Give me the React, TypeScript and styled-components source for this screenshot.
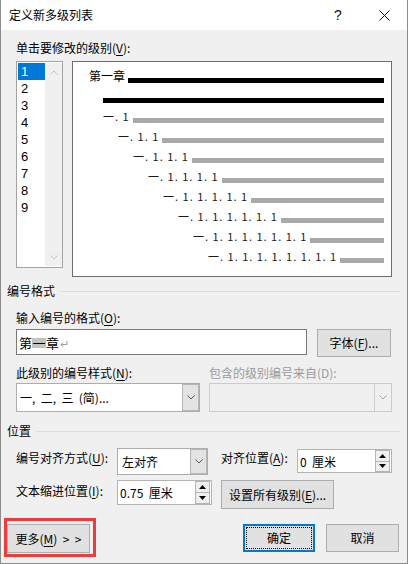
import React from "react";
import styled, { createGlobalStyle } from "styled-components";

const GlobalStyle = createGlobalStyle`
  html, body { margin: 0; padding: 0; background: #f0f0f0; }
  body {
    font-family: "Noto Sans CJK SC", "Microsoft YaHei UI", sans-serif;
    font-size: 12px;
    color: #000;
  }
  * { box-sizing: border-box; }
  u { text-underline-offset: 2px; }
`;

const Window = styled.div`
  width: 408px;
  height: 564px;
  background: #f0f0f0;
  border: 1px solid #8c8c8c;
  border-top: none;
  display: flex;
  flex-direction: column;
  overflow: hidden;
`;

const TitleBar = styled.div`
  height: 30px;
  flex: none;
  background: #fff;
  display: flex;
  align-items: center;
  padding-left: 8px;
`;

const TitleText = styled.div`
  flex: 1;
  font-size: 12px;
  line-height: 16px;
`;

const CaptionButton = styled.div`
  width: 46px;
  height: 30px;
  display: flex;
  align-items: center;
  justify-content: center;
  font-family: "Liberation Sans", sans-serif;
  font-size: 14px;
  color: #111;
`;

const Body = styled.div`
  flex: 1;
  display: flex;
  flex-direction: column;
  padding: 0 15px;
`;

const Label = styled.div<{ $mt?: number; $disabled?: boolean; $w?: number }>`
  font-size: 12px;
  line-height: 16px;
  white-space: nowrap;
  margin-top: ${(p) => p.$mt ?? 0}px;
  color: ${(p) => (p.$disabled ? "#9a9a9a" : "#000")};
  ${(p) => (p.$w ? `width: ${p.$w}px; flex: none;` : "")}
`;

const LevelRow = styled.div`
  margin-top: 5px;
  display: flex;
  align-items: flex-start;
  height: 216px;
`;

const ListBox = styled.div`
  width: 47px;
  height: 207px;
  border: 1px solid #a3a3a3;
  background: #fff;
  padding: 1px 0 1px 1px;
  display: flex;
`;

const ListItems = styled.div`
  width: 27px;
  display: flex;
  flex-direction: column;
`;

const ListItem = styled.div<{ $selected?: boolean }>`
  height: 17px;
  line-height: 17px;
  padding-left: 3px;
  font-family: "Liberation Sans", Arial, sans-serif;
  font-size: 13px;
  background: ${(p) => (p.$selected ? "#0078d7" : "transparent")};
  color: ${(p) => (p.$selected ? "#fff" : "#000")};
`;

const ScrollTrack = styled.div`
  width: 17px;
  background: #f0f0f0;
  display: flex;
  flex-direction: column;
  justify-content: space-between;
  align-items: center;
  padding: 7px 0 6px;
`;

const Preview = styled.div`
  margin-left: 9px;
  width: 320px;
  height: 216px;
  border: 1px solid #6e6e6e;
  background: #fff;
  padding: 3px 7px 0 0;
  display: flex;
  flex-direction: column;
`;

const PreviewRow = styled.div<{ $indent: number }>`
  height: 20px;
  display: flex;
  align-items: flex-end;
  padding-left: ${(p) => p.$indent}px;
`;

const RowText = styled.span<{ $main?: boolean }>`
  font-size: ${(p) => (p.$main ? 12 : 11)}px;
  letter-spacing: ${(p) => (p.$main ? 0 : 1)}px;
  line-height: 14px;
  margin-bottom: 2px;
  color: ${(p) => (p.$main ? "#000" : "#1a1a1a")};
  white-space: pre;
`;

const RowLine = styled.div<{ $dark?: boolean; $gap: number }>`
  flex: 1;
  height: 5px;
  margin-bottom: 2px;
  margin-left: ${(p) => p.$gap}px;
  background: ${(p) => (p.$dark ? "#000" : "#a9a9a9")};
`;

const GroupHeader = styled.div<{ $mt: number }>`
  margin: ${(p) => p.$mt}px -8px 0 -9px;
  display: flex;
  align-items: center;
  font-size: 12px;
  line-height: 16px;
`;

const GroupLine = styled.div`
  flex: 1;
  height: 1px;
  margin-left: 5px;
  background: #dcdcdc;
`;

const Row = styled.div<{ $mt: number; $h: number }>`
  margin-top: ${(p) => p.$mt}px;
  height: ${(p) => p.$h}px;
  display: flex;
  align-items: flex-start;
`;

const TextInput = styled.div`
  width: 291px;
  height: 26px;
  border: 1px solid #7a7a7a;
  background: #fff;
  padding: 1px 2px 0;
  font-size: 13px;
  line-height: 16px;
  display: flex;
  align-items: center;
  align-self: flex-start;
`;

const Highlight = styled.span`
  display: inline-block;
  width: 14px;
  height: 10px;
  line-height: 10px;
  text-align: center;
  background: #c3c3c3;
`;

const ReturnMark = styled.span`
  color: #a0a0a0;
  font-size: 11px;
  margin-left: 1px;
`;

const PushButton = styled.div<{ $w: number; $h: number; $ml?: number }>`
  position: relative;
  width: ${(p) => p.$w}px;
  height: ${(p) => p.$h}px;
  margin-left: ${(p) => p.$ml ?? 0}px;
  flex: none;
  background: #e1e1e1;
  border: 1px solid #adadad;
  display: flex;
  align-items: center;
  justify-content: center;
  font-size: 12px;
  line-height: 16px;
  white-space: pre;
`;

const DefaultButton = styled(PushButton)`
  border: 2px solid #0078d7;
  &::after {
    content: "";
    position: absolute;
    inset: 1px;
    border: 1px dotted #000;
  }
`;

const Combo = styled.div<{ $w: number; $h: number; $ml?: number; $disabled?: boolean }>`
  width: ${(p) => p.$w}px;
  height: ${(p) => p.$h}px;
  margin-left: ${(p) => p.$ml ?? 0}px;
  flex: none;
  border: 1px solid ${(p) => (p.$disabled ? "#cccccc" : "#adadad")};
  background: ${(p) => (p.$disabled ? "#f0f0f0" : "#fff")};
  display: flex;
  align-items: stretch;
`;

const ComboText = styled.div<{ $pl?: number }>`
  flex: 1;
  padding-left: ${(p) => p.$pl ?? 3}px;
  display: flex;
  align-items: center;
  font-size: 12px;
  white-space: pre;
`;

const ComboArrow = styled.div<{ $disabled?: boolean }>`
  width: 17px;
  flex: none;
  display: flex;
  align-items: center;
  justify-content: center;
  background: ${(p) => (p.$disabled ? "#f0f0f0" : "#e3e3e3")};
  border: 1px solid ${(p) => (p.$disabled ? "#cccccc" : "#b6b6b6")};
  border-width: ${(p) => (p.$disabled ? "0 0 0 1px" : "1px")};
`;

const SpinBox = styled.div<{ $w: number; $h: number; $mt?: number }>`
  width: ${(p) => p.$w}px;
  height: ${(p) => p.$h}px;
  margin-top: ${(p) => p.$mt ?? 0}px;
  flex: none;
  border: 1px solid #b4b4b4;
  background: #fff;
  display: flex;
`;

const SpinText = styled.div`
  flex: 1;
  padding-left: 2px;
  display: flex;
  align-items: center;
  font-size: 12px;
  white-space: pre;
`;

const SpinButtons = styled.div`
  width: 15px;
  margin: 0 1px 0 0;
  display: flex;
  flex-direction: column;
`;

const SpinButton = styled.div`
  flex: 1;
  border: 1px solid #b4b4b4;
  background: #efefef;
  display: flex;
  align-items: center;
  justify-content: center;
  & + & { border-top: none; }
`;

const ButtonRow = styled.div`
  margin: 15px -7px 0 -9px;
  display: flex;
  align-items: flex-start;
`;

const Marked = styled.div`
  position: relative;
`;

const RedFrame = styled.div`
  position: absolute;
  top: -6px;
  left: -3px;
  right: -6px;
  bottom: -4px;
  border: 3px solid #ef3b3b;
  pointer-events: none;
`;

const Spacer = styled.div`
  flex: 1;
`;

const Chevron = ({ up, color }: { up?: boolean; color: string }) => (
  <svg width="8" height="5" viewBox="0 0 8 5">
    <polyline
      points={up ? "0.5,4.5 4,1 7.5,4.5" : "0.5,0.5 4,4 7.5,0.5"}
      fill="none"
      stroke={color}
      strokeWidth="1"
    />
  </svg>
);

const Triangle = ({ up }: { up?: boolean }) => (
  <svg width="7" height="4" viewBox="0 0 7 4">
    <polygon points={up ? "3.5,0 7,4 0,4" : "0,0 7,0 3.5,4"} fill="#000" />
  </svg>
);

const CloseGlyph = () => (
  <svg width="11" height="11" viewBox="0 0 11 11">
    <path d="M0.5 0.5 L10.5 10.5 M10.5 0.5 L0.5 10.5" stroke="#111" strokeWidth="1" />
  </svg>
);

const levels = ["1", "2", "3", "4", "5", "6", "7", "8", "9"];

const subRows = Array.from({ length: 8 }, (_, i) => ({
  indent: 30 + 15 * i,
  text: "一" + ". 1".repeat(i + 1),
}));

export default function App() {
  return (
    <>
      <GlobalStyle />
      <Window>
        <TitleBar>
          <TitleText>定义新多级列表</TitleText>
          <CaptionButton>?</CaptionButton>
          <CaptionButton>
            <CloseGlyph />
          </CaptionButton>
        </TitleBar>
        <Body>
          <Label $mt={10}>
            单击要修改的级别(<u>V</u>):
          </Label>
          <LevelRow>
            <ListBox>
              <ListItems>
                {levels.map((l, i) => (
                  <ListItem key={l} $selected={i === 0}>
                    {l}
                  </ListItem>
                ))}
              </ListItems>
              <ScrollTrack>
                <Chevron up color="#c2c2c2" />
                <Chevron color="#c2c2c2" />
              </ScrollTrack>
            </ListBox>
            <Preview>
              <PreviewRow $indent={16}>
                <RowText $main>第一章</RowText>
                <RowLine $dark $gap={3} />
              </PreviewRow>
              <PreviewRow $indent={30}>
                <RowLine $dark $gap={0} />
              </PreviewRow>
              {subRows.map((r) => (
                <PreviewRow key={r.indent} $indent={r.indent}>
                  <RowText>{r.text}</RowText>
                  <RowLine $gap={3} />
                </PreviewRow>
              ))}
            </Preview>
          </LevelRow>

          <GroupHeader $mt={6}>
            编号格式
            <GroupLine />
          </GroupHeader>
          <Label $mt={11}>
            输入编号的格式(<u>O</u>):
          </Label>
          <Row $mt={3} $h={28}>
            <TextInput>
              第<Highlight>一</Highlight>章<ReturnMark>↵</ReturnMark>
            </TextInput>
            <PushButton $w={74} $h={28} $ml={10}>
              字体(<u>F</u>)...
            </PushButton>
          </Row>
          <Row $mt={8} $h={16}>
            <Label $w={193}>
              此级别的编号样式(<u>N</u>):
            </Label>
            <Label $disabled>包含的级别编号来自(D):</Label>
          </Row>
          <Row $mt={2} $h={29}>
            <Combo $w={184} $h={29}>
              <ComboText>{"一,  二,  三  (简)..."}</ComboText>
              <ComboArrow>
                <Chevron color="#5c5c5c" />
              </ComboArrow>
            </Combo>
            <Combo $w={183} $h={29} $ml={9} $disabled>
              <ComboText />
              <ComboArrow $disabled>
                <Chevron color="#a6a6a6" />
              </ComboArrow>
            </Combo>
          </Row>

          <GroupHeader $mt={11}>
            位置
            <GroupLine />
          </GroupHeader>
          <Row $mt={9} $h={27}>
            <Label $w={101} $mt={2}>
              编号对齐方式(<u>U</u>):
            </Label>
            <Combo $w={91} $h={27}>
              <ComboText $pl={4}>左对齐</ComboText>
              <ComboArrow>
                <Chevron color="#5c5c5c" />
              </ComboArrow>
            </Combo>
            <Label $w={76} $mt={2} style={{ marginLeft: 13 }}>
              对齐位置(<u>A</u>):
            </Label>
            <SpinBox $w={95} $h={24} $mt={1}>
              <SpinText>{"0  厘米"}</SpinText>
              <SpinButtons>
                <SpinButton>
                  <Triangle up />
                </SpinButton>
                <SpinButton>
                  <Triangle />
                </SpinButton>
              </SpinButtons>
            </SpinBox>
          </Row>
          <Row $mt={5} $h={29}>
            <Label $w={101} $mt={3}>
              文本缩进位置(<u>I</u>):
            </Label>
            <SpinBox $w={95} $h={25}>
              <SpinText>{"0.75  厘米"}</SpinText>
              <SpinButtons>
                <SpinButton>
                  <Triangle up />
                </SpinButton>
                <SpinButton>
                  <Triangle />
                </SpinButton>
              </SpinButtons>
            </SpinBox>
            <PushButton $w={113} $h={29} $ml={9}>
              设置所有级别(<u>E</u>)...
            </PushButton>
          </Row>

          <ButtonRow>
            <Marked>
              <PushButton $w={83} $h={29}>
                更多(<u>M</u>){"  >  >"}
              </PushButton>
              <RedFrame />
            </Marked>
            <Spacer />
            <DefaultButton $w={72} $h={28}>
              确定
            </DefaultButton>
            <PushButton $w={73} $h={28} $ml={11}>
              取消
            </PushButton>
          </ButtonRow>
        </Body>
      </Window>
    </>
  );
}
